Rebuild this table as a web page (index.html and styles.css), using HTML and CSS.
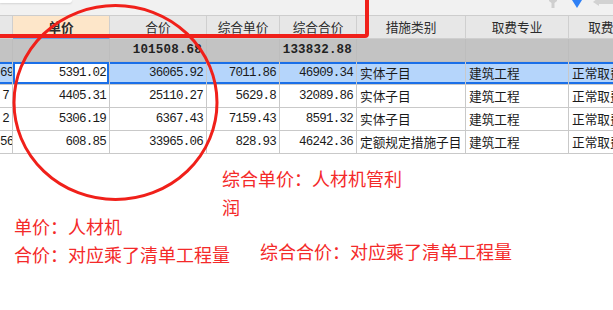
FILE: index.html
```html
<!DOCTYPE html>
<html lang="zh">
<head>
<meta charset="utf-8">
<link rel="stylesheet" href="styles.css">
</head>
<body>
<div class="app">
  <div class="topbar">
    <div class="tab"></div>
    <svg class="tools" width="64" height="9" viewBox="0 0 64 9">
      <path d="M0 0 H8 V1 L5.5 3 V8 H2.5 V3 L0 1 Z" fill="#cfcfcf"/>
      <path d="M23 0 H33 L28 8 Z" fill="#2f80f5"/>
      <path d="M44 2 L49 -2 V0 H64 V4 H50 V6 Z" fill="#d2d2d2"/>
    </svg>
  </div>
  <div class="grid">
    <div class="row head">
      <div class="c"></div>
      <div class="c active-head">单价</div>
      <div class="c">合价</div>
      <div class="c">综合单价</div>
      <div class="c">综合合价</div>
      <div class="c">措施类别</div>
      <div class="c">取费专业</div>
      <div class="c">取费方式</div>
    </div>
    <div class="row sum">
      <div class="c"></div>
      <div class="c"></div>
      <div class="c num">101508.68</div>
      <div class="c"></div>
      <div class="c num">133832.88</div>
      <div class="c"></div>
      <div class="c"></div>
      <div class="c"></div>
    </div>
    <div class="row sel">
      <div class="c num">69</div>
      <div class="c num cur">5391.02</div>
      <div class="c num">36065.92</div>
      <div class="c num">7011.86</div>
      <div class="c num">46909.34</div>
      <div class="c txt">实体子目</div>
      <div class="c txt">建筑工程</div>
      <div class="c txt">正常取费</div>
    </div>
    <div class="row">
      <div class="c num">7</div>
      <div class="c num">4405.31</div>
      <div class="c num">25110.27</div>
      <div class="c num">5629.8</div>
      <div class="c num">32089.86</div>
      <div class="c txt">实体子目</div>
      <div class="c txt">建筑工程</div>
      <div class="c txt">正常取费</div>
    </div>
    <div class="row">
      <div class="c num">2</div>
      <div class="c num">5306.19</div>
      <div class="c num">6367.43</div>
      <div class="c num">7159.43</div>
      <div class="c num">8591.32</div>
      <div class="c txt">实体子目</div>
      <div class="c txt">建筑工程</div>
      <div class="c txt">正常取费</div>
    </div>
    <div class="row">
      <div class="c num">56</div>
      <div class="c num">608.85</div>
      <div class="c num">33965.06</div>
      <div class="c num">828.93</div>
      <div class="c num">46242.36</div>
      <div class="c txt">定额规定措施子目</div>
      <div class="c txt">建筑工程</div>
      <div class="c txt">正常取费</div>
    </div>
  </div>
  <div class="notes">
    <div class="notes-left">
      <div>单价：人材机</div>
      <div>合价：对应乘了清单工程量</div>
    </div>
    <div class="notes-right">
      <div class="note-wrap">综合单价：人材机管利润</div>
      <div class="note-total">综合合价：对应乘了清单工程量</div>
    </div>
  </div>
  <div class="mark-rect"></div>
  <svg class="mark-circle" width="613" height="310" viewBox="0 0 613 310">
    <ellipse cx="115.5" cy="102.5" rx="101.5" ry="97" fill="none" stroke="#f0201a" stroke-width="3"/>
  </svg>
</div>
</body>
</html>
```
FILE: styles.css
```css
html, body {
  margin: 0;
  padding: 0;
  background: #ffffff;
  overflow: hidden;
}

.app {
  position: relative;
  width: 613px;
  height: 310px;
  overflow: hidden;
  font-family: "Noto Sans CJK SC", "Noto Sans", sans-serif;
}

.topbar {
  height: 15px;
  background: #f1f1f1;
  border-bottom: 1px solid #cdcdcd;
  display: flex;
  justify-content: space-between;
  align-items: flex-start;
}

.tab {
  width: 72px;
  height: 3px;
  background: #ffffff;
  border-radius: 0 0 6px 0;
  box-shadow: 0 1px 2px rgba(0, 0, 0, 0.12);
}

.tools {
  display: block;
}

.grid {
  width: 659px;
}

.row {
  display: grid;
  grid-template-columns: 13px 97px 97px 73px 77px 109px 103px 90px;
  height: 23px;
}

.c {
  box-sizing: border-box;
  height: 23px;
  border-right: 1px solid #c9c9c9;
  border-bottom: 1px solid #c9c9c9;
  line-height: 22px;
  font-size: 12.7px;
  color: #1a1a1a;
  white-space: nowrap;
  overflow: hidden;
}

.head .c {
  background: #e7e7e7;
  text-align: center;
  color: #2b2b2b;
  border-color: #cfcfcf;
}

.head .active-head {
  background: #fde6c9;
  font-weight: bold;
  border-bottom: 1px solid #6ba3e6;
}

.sum .c {
  background: #c3c3c3;
  border-color: #bdbdbd;
  color: #222;
}

.num {
  font-family: "Liberation Mono", monospace;
  font-size: 12.5px;
  letter-spacing: -0.75px;
  text-align: right;
  padding-right: 3px;
}

.sum .num {
  font-weight: bold;
  letter-spacing: 0.2px;
  padding-right: 4px;
}

.txt {
  text-align: left;
  padding-left: 3px;
}

.sel .c {
  background: #b5d5fb;
  box-shadow: inset 0 2px #1a6fe8, inset 0 -2px #1a6fe8;
}

.sel .cur {
  background: #ffffff;
  box-shadow: inset 0 2px #1a6fe8, inset 0 -2px #1a6fe8, inset 2px 0 #1a6fe8, inset -2px 0 #1a6fe8;
}

.notes {
  display: flex;
  font-size: 18px;
  line-height: 28px;
  color: #f42a2a;
}

.notes-left {
  margin-left: 14px;
  width: 208px;
  padding-top: 58px;
  white-space: nowrap;
}

.notes-right {
  display: flex;
  flex-direction: column;
  align-items: flex-start;
}

.note-wrap {
  width: 186px;
  margin-top: 10px;
  line-height: 29px;
}

.note-total {
  margin-top: 15px;
  margin-left: 38px;
  white-space: nowrap;
}

.mark-rect {
  position: absolute;
  left: -10px;
  top: -10px;
  width: 379px;
  height: 48px;
  box-sizing: border-box;
  border: 4px solid #f0201a;
  border-radius: 4px;
}

.mark-circle {
  position: absolute;
  left: 0;
  top: 0;
  pointer-events: none;
}
```
